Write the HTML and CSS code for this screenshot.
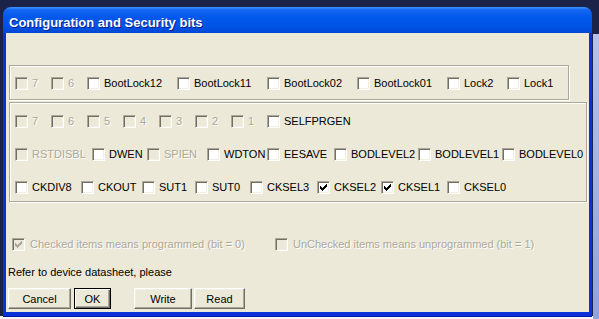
FILE: index.html
```html
<!DOCTYPE html>
<html lang="en">

<head>
    <meta charset="UTF-8">
    <meta name="viewport" content="width=device-width, initial-scale=1.0">
    <title>Configuration and Security bits</title>
    <link rel="stylesheet" href="styles.css">
</head>

<body>
    <div class="window">
        <div class="titlebar">
            <span class="title">Configuration and Security bits</span>
        </div>

        <div class="client">
            <!-- lock bits -->
            <div class="group group-lock">
                <div class="row row-lock">
                    <span class="check is-disabled"><span class="box"></span><span>7</span></span>
                    <span class="check is-disabled"><span class="box"></span><span>6</span></span>
                    <span class="check"><span class="box"></span><span>BootLock12</span></span>
                    <span class="check"><span class="box"></span><span>BootLock11</span></span>
                    <span class="check"><span class="box"></span><span>BootLock02</span></span>
                    <span class="check"><span class="box"></span><span>BootLock01</span></span>
                    <span class="check"><span class="box"></span><span>Lock2</span></span>
                    <span class="check"><span class="box"></span><span>Lock1</span></span>
                </div>
            </div>

            <!-- fuse bits -->
            <div class="group group-fuse">
                <div class="row row-ext">
                    <span class="check is-disabled"><span class="box"></span><span>7</span></span>
                    <span class="check is-disabled"><span class="box"></span><span>6</span></span>
                    <span class="check is-disabled"><span class="box"></span><span>5</span></span>
                    <span class="check is-disabled"><span class="box"></span><span>4</span></span>
                    <span class="check is-disabled"><span class="box"></span><span>3</span></span>
                    <span class="check is-disabled"><span class="box"></span><span>2</span></span>
                    <span class="check is-disabled"><span class="box"></span><span>1</span></span>
                    <span class="check"><span class="box"></span><span>SELFPRGEN</span></span>
                </div>
                <div class="row row-high">
                    <span class="check is-disabled"><span class="box"></span><span>RSTDISBL</span></span>
                    <span class="check"><span class="box"></span><span>DWEN</span></span>
                    <span class="check is-disabled"><span class="box"></span><span>SPIEN</span></span>
                    <span class="check"><span class="box"></span><span>WDTON</span></span>
                    <span class="check"><span class="box"></span><span>EESAVE</span></span>
                    <span class="check"><span class="box"></span><span>BODLEVEL2</span></span>
                    <span class="check"><span class="box"></span><span>BODLEVEL1</span></span>
                    <span class="check"><span class="box"></span><span>BODLEVEL0</span></span>
                </div>
                <div class="row row-low">
                    <span class="check"><span class="box"></span><span>CKDIV8</span></span>
                    <span class="check"><span class="box"></span><span>CKOUT</span></span>
                    <span class="check"><span class="box"></span><span>SUT1</span></span>
                    <span class="check"><span class="box"></span><span>SUT0</span></span>
                    <span class="check"><span class="box"></span><span>CKSEL3</span></span>
                    <span class="check"><span class="box"><svg class="tick" viewBox="1 1 11 11" width="11" height="11"><polygon points="3,5 4,5 4,6 5,6 5,7 6,7 6,6 7,6 7,5 8,5 8,4 9,4 9,3 10,3 10,6 9,6 9,7 8,7 8,8 7,8 7,9 6,9 6,10 5,10 5,9 4,9 4,8 3,8"/></svg></span><span>CKSEL2</span></span>
                    <span class="check"><span class="box"><svg class="tick" viewBox="1 1 11 11" width="11" height="11"><polygon points="3,5 4,5 4,6 5,6 5,7 6,7 6,6 7,6 7,5 8,5 8,4 9,4 9,3 10,3 10,6 9,6 9,7 8,7 8,8 7,8 7,9 6,9 6,10 5,10 5,9 4,9 4,8 3,8"/></svg></span><span>CKSEL1</span></span>
                    <span class="check"><span class="box"></span><span>CKSEL0</span></span>
                </div>
            </div>

            <div class="row legend">
                <span class="check is-disabled"><span class="box"><svg class="tick" viewBox="1 1 11 11" width="11" height="11"><polygon points="3,5 4,5 4,6 5,6 5,7 6,7 6,6 7,6 7,5 8,5 8,4 9,4 9,3 10,3 10,6 9,6 9,7 8,7 8,8 7,8 7,9 6,9 6,10 5,10 5,9 4,9 4,8 3,8"/></svg></span><span>Checked items means programmed (bit = 0)</span></span>
                <span class="check is-disabled"><span class="box"></span><span>UnChecked items means unprogrammed (bit = 1)</span></span>
            </div>

            <p class="note">Refer to device datasheet, please</p>

            <div class="buttons">
                <button class="btn btn-cancel">Cancel</button>
                <button class="btn btn-ok btn-default">OK</button>
                <button class="btn btn-write">Write</button>
                <button class="btn btn-read">Read</button>
            </div>
        </div>
    </div>
</body>

</html>
```

FILE: styles.css
```css
body {
    margin: 0;
    padding: 0;
    width: 599px;
    height: 319px;
    overflow: hidden;
    font-family: "Liberation Sans", Arial, sans-serif;
    font-size: 11px;
    color: #000;
    background-color: #1b2448;
    background-image:
        linear-gradient(#b4c2ea, #8fa3dc),
        linear-gradient(#f3f5fb, #f3f5fb);
    background-position: 593px 34px, 0 316px;
    background-size: 6px 285px, 599px 3px;
    background-repeat: no-repeat;
}

.window {
    width: 589px;
    margin: 7px 0 0 3px;
}

.titlebar {
    height: 26px;
    box-sizing: border-box;
    padding: 5px 0 0 6px;
    border-radius: 8px 8px 0 0;
    background: linear-gradient(#3d93ff 0, #1466f2 3px, #0058ea 40%, #0053e4 75%, #0048d6 100%);
}

.title {
    display: block;
    font-size: 13px;
    font-weight: bold;
    line-height: 21px;
    color: #fff;
    text-shadow: 1px 1px #0a1c8c;
}

.client {
    height: 279px;
    background: #ece9d8;
    border: solid #0831d9;
    border-width: 0 3px 4px;
    box-shadow: 0 1px 0 #001a9c;
    overflow: hidden;
}

.group {
    box-sizing: border-box;
    margin-left: 3px;
    border: 1px solid #aca899;
    box-shadow: inset 1px 1px #fff, 1px 1px #fff;
}

.group-lock {
    width: 560px;
    height: 35px;
    margin-top: 32px;
    padding: 7px 0 0 5px;
}

.group-fuse {
    width: 578px;
    height: 100px;
    margin-top: 2px;
    padding: 8px 0 0 5px;
    display: flex;
    flex-direction: column;
    gap: 13px;
}

.row {
    display: grid;
    align-items: center;
    height: 20px;
}

.row-lock {
    grid-template-columns: 36px 36px 90px 90px 90px 90px 60px auto;
}

.row-ext {
    grid-template-columns: repeat(7, 36px) auto;
}

.row-high {
    grid-template-columns: 77px 55px 60px 60px 67px 84px 84px auto;
}

.row-low {
    grid-template-columns: 66px 61px 53px 55px 67px 64px 66px auto;
}

.check {
    display: flex;
    align-items: center;
    gap: 4px;
    line-height: 13px;
    white-space: nowrap;
    overflow: hidden;
}

.check.is-disabled {
    color: #aca899;
    text-shadow: 1px 1px #fff;
}

.box {
    flex: none;
    width: 13px;
    height: 13px;
    box-sizing: border-box;
    border: 1px solid;
    border-color: #aca899 #fff #fff #aca899;
    box-shadow: inset 1px 1px #716f64, inset -1px -1px #f1efe2;
    background: #fff;
}

.is-disabled .box {
    background: #ece9d8;
}

.tick {
    display: block;
    fill: currentColor;
    shape-rendering: crispEdges;
}

.legend {
    grid-template-columns: 263px auto;
    margin-top: 32px;
    padding-left: 6px;
}

.legend .check {
    gap: 5px;
}

.note {
    margin: 11px 0 0 2px;
    line-height: 14px;
}

.buttons {
    display: flex;
    gap: 2px;
    margin: 9px 0 0 2px;
}

.btn {
    height: 21px;
    box-sizing: border-box;
    padding: 0;
    font-family: "Liberation Sans", Arial, sans-serif;
    font-size: 11px;
    color: #000;
    background: #ece9d8;
    border: 1px solid;
    border-color: #fff #716f64 #716f64 #fff;
    box-shadow: inset -1px -1px #aca899, inset 1px 1px #f1efe2;
}

.btn-default {
    border-color: #000;
    box-shadow: inset 1px 1px #fff, inset -1px -1px #716f64, inset -2px -2px #aca899;
}

.btn-cancel {
    width: 63px;
}

.btn-ok {
    width: 37px;
    margin-left: 1px;
}

.btn-write {
    width: 58px;
    margin-left: 21px;
}

.btn-read {
    width: 51px;
}
```
